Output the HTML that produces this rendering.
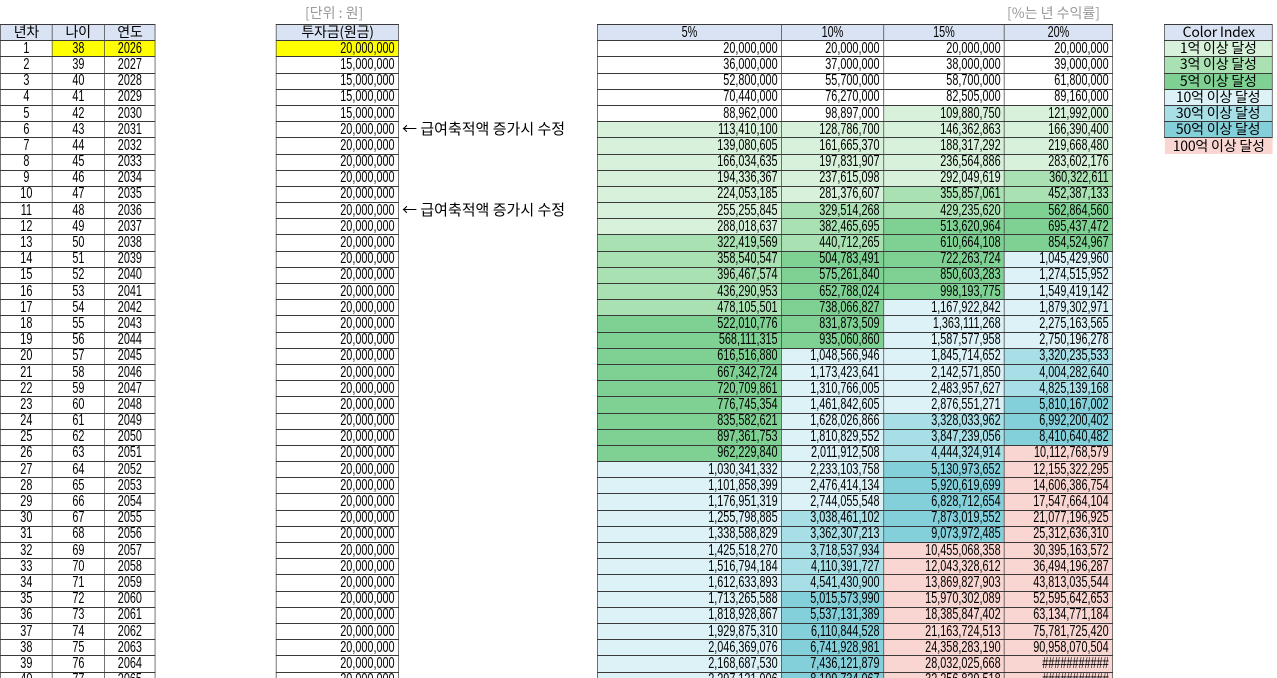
<!DOCTYPE html>
<html><head><meta charset="utf-8"><style>
html,body{margin:0;padding:0;width:1277px;height:678px;overflow:hidden;background:#fff}
body{position:relative;font-family:"Liberation Sans","Noto Sans CJK KR",sans-serif}
table{position:absolute;left:0;top:24px;width:1817.4px;border-collapse:collapse;table-layout:fixed;transform:scaleX(0.7);transform-origin:0 0}
td{padding:0 3px;height:15.2px;font-size:15.5px;line-height:14px;white-space:nowrap;overflow:visible;color:#000}
td.b{border:1px solid #3a3a3a;}
td.c{text-align:center}
td.r{text-align:right;padding-right:5px}
tr.h td.b{background:#dae3f3;text-align:center}
.k{display:inline-block;transform:scaleX(1.4286);font-family:"Noto Sans CJK KR","Liberation Sans",sans-serif;font-size:14px;letter-spacing:-0.2px}
.y{background:#ffff00}
.g1{background:#d8f1db}.g2{background:#a9e1b3}.g3{background:#7fd193}
.c1{background:#dcf2f6}.c2{background:#a8dee6}.c3{background:#84d0da}.p{background:#f9d6d2}
td.l{text-align:center}
.t{position:absolute;font-family:"Noto Sans CJK KR","Liberation Sans",sans-serif;font-size:14px;color:#999;line-height:16px}
.n{position:absolute;left:402px;font-family:"Noto Sans CJK KR","Liberation Sans",sans-serif;font-size:15px;color:#000;line-height:16px}
</style></head><body>
<div class="t" style="left:305px;top:5px">[단위 : 원]</div>
<div class="t" style="left:1007px;top:5px">[%는 년 수익률]</div>
<table>
<colgroup><col style="width:74.3px"><col style="width:74.3px"><col style="width:72.9px"><col style="width:172.9px"><col style="width:174.3px"><col style="width:284.3px"><col style="width:262.9px"><col style="width:145.7px"><col style="width:172.9px"><col style="width:154.3px"><col style="width:74.3px"><col style="width:154.3px"></colgroup>
<tr class="h"><td class="b"><span class="k">년차</span></td><td class="b"><span class="k">나이</span></td><td class="b"><span class="k">연도</span></td><td></td><td class="b"><span class="k">투자금(원금)</span></td><td></td><td class="b">5%</td><td class="b">10%</td><td class="b">15%</td><td class="b">20%</td><td></td><td class="b"><span class="k">Color Index</span></td></tr>
<tr><td class="b c">1</td><td class="b c y">38</td><td class="b c y">2026</td><td></td><td class="b r y">20,000,000</td><td></td><td class="b r">20,000,000</td><td class="b r">20,000,000</td><td class="b r">20,000,000</td><td class="b r">20,000,000</td><td></td><td class="b l g1"><span class="k">1억 이상 달성</span></td></tr>
<tr><td class="b c">2</td><td class="b c">39</td><td class="b c">2027</td><td></td><td class="b r">15,000,000</td><td></td><td class="b r">36,000,000</td><td class="b r">37,000,000</td><td class="b r">38,000,000</td><td class="b r">39,000,000</td><td></td><td class="b l g2"><span class="k">3억 이상 달성</span></td></tr>
<tr><td class="b c">3</td><td class="b c">40</td><td class="b c">2028</td><td></td><td class="b r">15,000,000</td><td></td><td class="b r">52,800,000</td><td class="b r">55,700,000</td><td class="b r">58,700,000</td><td class="b r">61,800,000</td><td></td><td class="b l g3"><span class="k">5억 이상 달성</span></td></tr>
<tr><td class="b c">4</td><td class="b c">41</td><td class="b c">2029</td><td></td><td class="b r">15,000,000</td><td></td><td class="b r">70,440,000</td><td class="b r">76,270,000</td><td class="b r">82,505,000</td><td class="b r">89,160,000</td><td></td><td class="b l c1"><span class="k">10억 이상 달성</span></td></tr>
<tr><td class="b c">5</td><td class="b c">42</td><td class="b c">2030</td><td></td><td class="b r">15,000,000</td><td></td><td class="b r">88,962,000</td><td class="b r">98,897,000</td><td class="b r g1">109,880,750</td><td class="b r g1">121,992,000</td><td></td><td class="b l c2"><span class="k">30억 이상 달성</span></td></tr>
<tr><td class="b c">6</td><td class="b c">43</td><td class="b c">2031</td><td></td><td class="b r">20,000,000</td><td></td><td class="b r g1">113,410,100</td><td class="b r g1">128,786,700</td><td class="b r g1">146,362,863</td><td class="b r g1">166,390,400</td><td></td><td class="b l c3"><span class="k">50억 이상 달성</span></td></tr>
<tr><td class="b c">7</td><td class="b c">44</td><td class="b c">2032</td><td></td><td class="b r">20,000,000</td><td></td><td class="b r g1">139,080,605</td><td class="b r g1">161,665,370</td><td class="b r g1">188,317,292</td><td class="b r g1">219,668,480</td><td></td><td class="l p"><span class="k">100억 이상 달성</span></td></tr>
<tr><td class="b c">8</td><td class="b c">45</td><td class="b c">2033</td><td></td><td class="b r">20,000,000</td><td></td><td class="b r g1">166,034,635</td><td class="b r g1">197,831,907</td><td class="b r g1">236,564,886</td><td class="b r g1">283,602,176</td><td></td><td></td></tr>
<tr><td class="b c">9</td><td class="b c">46</td><td class="b c">2034</td><td></td><td class="b r">20,000,000</td><td></td><td class="b r g1">194,336,367</td><td class="b r g1">237,615,098</td><td class="b r g1">292,049,619</td><td class="b r g2">360,322,611</td><td></td><td></td></tr>
<tr><td class="b c">10</td><td class="b c">47</td><td class="b c">2035</td><td></td><td class="b r">20,000,000</td><td></td><td class="b r g1">224,053,185</td><td class="b r g1">281,376,607</td><td class="b r g2">355,857,061</td><td class="b r g2">452,387,133</td><td></td><td></td></tr>
<tr><td class="b c">11</td><td class="b c">48</td><td class="b c">2036</td><td></td><td class="b r">20,000,000</td><td></td><td class="b r g1">255,255,845</td><td class="b r g2">329,514,268</td><td class="b r g2">429,235,620</td><td class="b r g3">562,864,560</td><td></td><td></td></tr>
<tr><td class="b c">12</td><td class="b c">49</td><td class="b c">2037</td><td></td><td class="b r">20,000,000</td><td></td><td class="b r g1">288,018,637</td><td class="b r g2">382,465,695</td><td class="b r g3">513,620,964</td><td class="b r g3">695,437,472</td><td></td><td></td></tr>
<tr><td class="b c">13</td><td class="b c">50</td><td class="b c">2038</td><td></td><td class="b r">20,000,000</td><td></td><td class="b r g2">322,419,569</td><td class="b r g2">440,712,265</td><td class="b r g3">610,664,108</td><td class="b r g3">854,524,967</td><td></td><td></td></tr>
<tr><td class="b c">14</td><td class="b c">51</td><td class="b c">2039</td><td></td><td class="b r">20,000,000</td><td></td><td class="b r g2">358,540,547</td><td class="b r g3">504,783,491</td><td class="b r g3">722,263,724</td><td class="b r c1">1,045,429,960</td><td></td><td></td></tr>
<tr><td class="b c">15</td><td class="b c">52</td><td class="b c">2040</td><td></td><td class="b r">20,000,000</td><td></td><td class="b r g2">396,467,574</td><td class="b r g3">575,261,840</td><td class="b r g3">850,603,283</td><td class="b r c1">1,274,515,952</td><td></td><td></td></tr>
<tr><td class="b c">16</td><td class="b c">53</td><td class="b c">2041</td><td></td><td class="b r">20,000,000</td><td></td><td class="b r g2">436,290,953</td><td class="b r g3">652,788,024</td><td class="b r g3">998,193,775</td><td class="b r c1">1,549,419,142</td><td></td><td></td></tr>
<tr><td class="b c">17</td><td class="b c">54</td><td class="b c">2042</td><td></td><td class="b r">20,000,000</td><td></td><td class="b r g2">478,105,501</td><td class="b r g3">738,066,827</td><td class="b r c1">1,167,922,842</td><td class="b r c1">1,879,302,971</td><td></td><td></td></tr>
<tr><td class="b c">18</td><td class="b c">55</td><td class="b c">2043</td><td></td><td class="b r">20,000,000</td><td></td><td class="b r g3">522,010,776</td><td class="b r g3">831,873,509</td><td class="b r c1">1,363,111,268</td><td class="b r c1">2,275,163,565</td><td></td><td></td></tr>
<tr><td class="b c">19</td><td class="b c">56</td><td class="b c">2044</td><td></td><td class="b r">20,000,000</td><td></td><td class="b r g3">568,111,315</td><td class="b r g3">935,060,860</td><td class="b r c1">1,587,577,958</td><td class="b r c1">2,750,196,278</td><td></td><td></td></tr>
<tr><td class="b c">20</td><td class="b c">57</td><td class="b c">2045</td><td></td><td class="b r">20,000,000</td><td></td><td class="b r g3">616,516,880</td><td class="b r c1">1,048,566,946</td><td class="b r c1">1,845,714,652</td><td class="b r c2">3,320,235,533</td><td></td><td></td></tr>
<tr><td class="b c">21</td><td class="b c">58</td><td class="b c">2046</td><td></td><td class="b r">20,000,000</td><td></td><td class="b r g3">667,342,724</td><td class="b r c1">1,173,423,641</td><td class="b r c1">2,142,571,850</td><td class="b r c2">4,004,282,640</td><td></td><td></td></tr>
<tr><td class="b c">22</td><td class="b c">59</td><td class="b c">2047</td><td></td><td class="b r">20,000,000</td><td></td><td class="b r g3">720,709,861</td><td class="b r c1">1,310,766,005</td><td class="b r c1">2,483,957,627</td><td class="b r c2">4,825,139,168</td><td></td><td></td></tr>
<tr><td class="b c">23</td><td class="b c">60</td><td class="b c">2048</td><td></td><td class="b r">20,000,000</td><td></td><td class="b r g3">776,745,354</td><td class="b r c1">1,461,842,605</td><td class="b r c1">2,876,551,271</td><td class="b r c3">5,810,167,002</td><td></td><td></td></tr>
<tr><td class="b c">24</td><td class="b c">61</td><td class="b c">2049</td><td></td><td class="b r">20,000,000</td><td></td><td class="b r g3">835,582,621</td><td class="b r c1">1,628,026,866</td><td class="b r c2">3,328,033,962</td><td class="b r c3">6,992,200,402</td><td></td><td></td></tr>
<tr><td class="b c">25</td><td class="b c">62</td><td class="b c">2050</td><td></td><td class="b r">20,000,000</td><td></td><td class="b r g3">897,361,753</td><td class="b r c1">1,810,829,552</td><td class="b r c2">3,847,239,056</td><td class="b r c3">8,410,640,482</td><td></td><td></td></tr>
<tr><td class="b c">26</td><td class="b c">63</td><td class="b c">2051</td><td></td><td class="b r">20,000,000</td><td></td><td class="b r g3">962,229,840</td><td class="b r c1">2,011,912,508</td><td class="b r c2">4,444,324,914</td><td class="b r p">10,112,768,579</td><td></td><td></td></tr>
<tr><td class="b c">27</td><td class="b c">64</td><td class="b c">2052</td><td></td><td class="b r">20,000,000</td><td></td><td class="b r c1">1,030,341,332</td><td class="b r c1">2,233,103,758</td><td class="b r c3">5,130,973,652</td><td class="b r p">12,155,322,295</td><td></td><td></td></tr>
<tr><td class="b c">28</td><td class="b c">65</td><td class="b c">2053</td><td></td><td class="b r">20,000,000</td><td></td><td class="b r c1">1,101,858,399</td><td class="b r c1">2,476,414,134</td><td class="b r c3">5,920,619,699</td><td class="b r p">14,606,386,754</td><td></td><td></td></tr>
<tr><td class="b c">29</td><td class="b c">66</td><td class="b c">2054</td><td></td><td class="b r">20,000,000</td><td></td><td class="b r c1">1,176,951,319</td><td class="b r c1">2,744,055,548</td><td class="b r c3">6,828,712,654</td><td class="b r p">17,547,664,104</td><td></td><td></td></tr>
<tr><td class="b c">30</td><td class="b c">67</td><td class="b c">2055</td><td></td><td class="b r">20,000,000</td><td></td><td class="b r c1">1,255,798,885</td><td class="b r c2">3,038,461,102</td><td class="b r c3">7,873,019,552</td><td class="b r p">21,077,196,925</td><td></td><td></td></tr>
<tr><td class="b c">31</td><td class="b c">68</td><td class="b c">2056</td><td></td><td class="b r">20,000,000</td><td></td><td class="b r c1">1,338,588,829</td><td class="b r c2">3,362,307,213</td><td class="b r c3">9,073,972,485</td><td class="b r p">25,312,636,310</td><td></td><td></td></tr>
<tr><td class="b c">32</td><td class="b c">69</td><td class="b c">2057</td><td></td><td class="b r">20,000,000</td><td></td><td class="b r c1">1,425,518,270</td><td class="b r c2">3,718,537,934</td><td class="b r p">10,455,068,358</td><td class="b r p">30,395,163,572</td><td></td><td></td></tr>
<tr><td class="b c">33</td><td class="b c">70</td><td class="b c">2058</td><td></td><td class="b r">20,000,000</td><td></td><td class="b r c1">1,516,794,184</td><td class="b r c2">4,110,391,727</td><td class="b r p">12,043,328,612</td><td class="b r p">36,494,196,287</td><td></td><td></td></tr>
<tr><td class="b c">34</td><td class="b c">71</td><td class="b c">2059</td><td></td><td class="b r">20,000,000</td><td></td><td class="b r c1">1,612,633,893</td><td class="b r c2">4,541,430,900</td><td class="b r p">13,869,827,903</td><td class="b r p">43,813,035,544</td><td></td><td></td></tr>
<tr><td class="b c">35</td><td class="b c">72</td><td class="b c">2060</td><td></td><td class="b r">20,000,000</td><td></td><td class="b r c1">1,713,265,588</td><td class="b r c3">5,015,573,990</td><td class="b r p">15,970,302,089</td><td class="b r p">52,595,642,653</td><td></td><td></td></tr>
<tr><td class="b c">36</td><td class="b c">73</td><td class="b c">2061</td><td></td><td class="b r">20,000,000</td><td></td><td class="b r c1">1,818,928,867</td><td class="b r c3">5,537,131,389</td><td class="b r p">18,385,847,402</td><td class="b r p">63,134,771,184</td><td></td><td></td></tr>
<tr><td class="b c">37</td><td class="b c">74</td><td class="b c">2062</td><td></td><td class="b r">20,000,000</td><td></td><td class="b r c1">1,929,875,310</td><td class="b r c3">6,110,844,528</td><td class="b r p">21,163,724,513</td><td class="b r p">75,781,725,420</td><td></td><td></td></tr>
<tr><td class="b c">38</td><td class="b c">75</td><td class="b c">2063</td><td></td><td class="b r">20,000,000</td><td></td><td class="b r c1">2,046,369,076</td><td class="b r c3">6,741,928,981</td><td class="b r p">24,358,283,190</td><td class="b r p">90,958,070,504</td><td></td><td></td></tr>
<tr><td class="b c">39</td><td class="b c">76</td><td class="b c">2064</td><td></td><td class="b r">20,000,000</td><td></td><td class="b r c1">2,168,687,530</td><td class="b r c3">7,436,121,879</td><td class="b r p">28,032,025,668</td><td class="b r p">###########</td><td></td><td></td></tr>
<tr><td class="b c">40</td><td class="b c">77</td><td class="b c">2065</td><td></td><td class="b r">20,000,000</td><td></td><td class="b r c1">2,297,121,906</td><td class="b r c3">8,199,734,067</td><td class="b r p">32,256,829,518</td><td class="b r p">###########</td><td></td><td></td></tr>
</table>
<div class="n" style="top:121px">← 급여축적액 증가시 수정</div>
<div class="n" style="top:202px">← 급여축적액 증가시 수정</div>
</body></html>
